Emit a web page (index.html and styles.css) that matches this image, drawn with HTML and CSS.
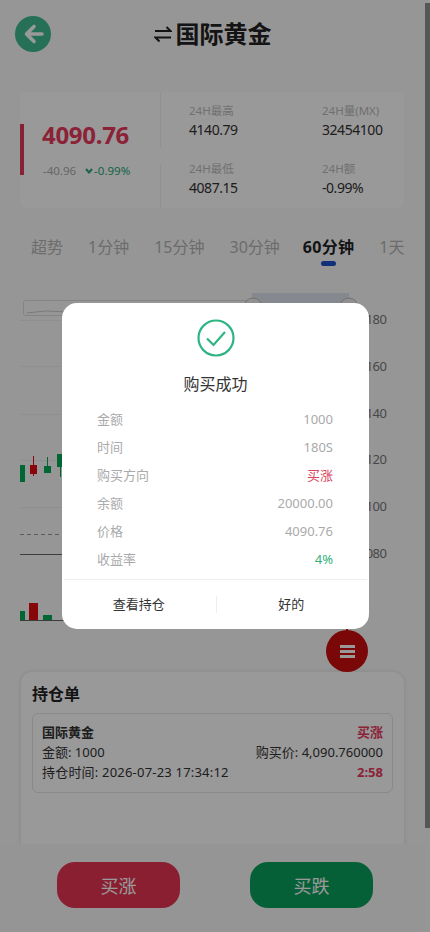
FILE: index.html
```html
<!DOCTYPE html>
<html lang="zh-CN">
<head>
<meta charset="utf-8">
<title>国际黄金</title>
<link rel="stylesheet" href="styles.css">
</head>
<body>
<div class="page">
  <header class="top">
    <button class="back" aria-label="返回">
      <svg viewBox="0 0 36 36" width="36" height="36"><circle cx="18" cy="18" r="18" class="back-bg"/><path d="M27 18H13M19 10.500L11.500 18L19 25.500" class="back-arrow"/></svg>
    </button>
    <div class="title">
      <svg viewBox="0 0 18 18" width="18" height="18"><path d="M1 6H16.500L12.500 2M17 12.500H1.500L5.500 16.500" class="swap"/></svg>
      <span>国际黄金</span>
    </div>
  </header>

  <section class="stats">
    <div class="stats-main">
      <div class="price">4090.76</div>
      <div class="change"><span>-40.96</span><span class="down"><svg viewBox="0 0 8 6" width="8" height="6"><path d="M1 1L4 4.500L7 1" class="chev"/></svg>-0.99%</span></div>
    </div>
    <div class="stats-grid">
      <div class="cell"><small>24H最高</small><b>4140.79</b></div>
      <div class="cell"><small>24H量(MX)</small><b>32454100</b></div>
      <div class="cell"><small>24H最低</small><b>4087.15</b></div>
      <div class="cell"><small>24H额</small><b>-0.99%</b></div>
    </div>
  </section>

  <nav class="tabs">
    <span>超势</span><span>1分钟</span><span>15分钟</span><span>30分钟</span><span class="active">60分钟</span><span>1天</span>
  </nav>

  <div class="chart">
    <svg viewBox="0 285 425 375" width="425" height="375">
      <rect x="23.500" y="300.500" width="240" height="15" rx="2" class="zoom-box"/>
      <path d="M27 313L45 311L70 312L120 308L260 309" class="zoom-line"/>
      <rect x="252" y="293" width="97" height="20" class="zoom-band"/>
      <circle cx="253" cy="307" r="9" class="zoom-handle"/>
      <circle cx="349" cy="307" r="9" class="zoom-handle"/>
      <path d="M20 320.500H365M20 366.500H365M20 414.500H365M20 460.500H365M20 507.500H365" class="grid"/>
      <path d="M20 534.500H365" class="dash"/>
      <path d="M20 554.500H365M20 620.500H365" class="axis"/>
      <g class="up">
        <rect x="20" y="465" width="5" height="17"/>
        <rect x="44" y="466" width="7" height="7"/>
        <path d="M47.500 457V466M60.500 454V477" class="wick-up"/>
        <rect x="57" y="454" width="8" height="13"/>
        <rect x="20" y="611" width="5" height="9"/>
        <rect x="43" y="615" width="9" height="5"/>
      </g>
      <g class="fall">
        <path d="M33.500 456V476" class="wick-fall"/>
        <rect x="30" y="465" width="7" height="9"/>
        <rect x="29" y="603" width="9" height="17"/>
      </g>
      <g class="ylabels">
        <text x="386.500" y="324">4180</text>
        <text x="386.500" y="371">4160</text>
        <text x="386.500" y="418">4140</text>
        <text x="386.500" y="464">4120</text>
        <text x="386.500" y="511">4100</text>
        <text x="386.500" y="558">4080</text>
      </g>
    </svg>
    <button class="fab" aria-label="菜单"><i></i><i></i><i></i></button>
  </div>

  <section class="holdings">
    <h2>持仓单</h2>
    <div class="order">
      <div class="order-row"><b>国际黄金</b><b class="red">买涨</b></div>
      <div class="order-row"><span>金额: 1000</span><span>购买价: 4,090.760000</span></div>
      <div class="order-row"><span class="stamp">持仓时间: 2026-07-23 17:34:12</span><b class="red">2:58</b></div>
    </div>
  </section>
</div>

<footer class="actions">
  <button class="trade rise">买涨</button>
  <button class="trade drop">买跌</button>
</footer>

<div class="scrollbar"><div class="thumb"></div></div>
<div class="mask"></div>

<div class="modal">
  <svg class="ok" viewBox="0 0 38 38" width="38" height="38"><circle cx="19" cy="19" r="17.500" class="ok-ring"/><path d="M10 19.500L16.500 26L28 13" class="ok-check"/></svg>
  <div class="modal-title">购买成功</div>
  <dl class="rows">
    <div><dt>金额</dt><dd>1000</dd></div>
    <div><dt>时间</dt><dd>180S</dd></div>
    <div><dt>购买方向</dt><dd class="pink">买涨</dd></div>
    <div><dt>余额</dt><dd>20000.00</dd></div>
    <div><dt>价格</dt><dd>4090.76</dd></div>
    <div><dt>收益率</dt><dd class="mint">4%</dd></div>
  </dl>
  <div class="modal-actions">
    <button>查看持仓</button>
    <button>好的</button>
  </div>
</div>
</body>
</html>
```
FILE: styles.css
```css
* { box-sizing: border-box; }
html, body { margin: 0; padding: 0; }
body {
  width: 430px;
  height: 932px;
  overflow: hidden;
  position: relative;
  background: #fbfbfb;
  font-family: "Noto Sans", "Noto Sans CJK SC", sans-serif;
  color: #222;
}
button { font: inherit; border: 0; background: none; padding: 0; color: inherit; }
.page { width: 425px; height: 932px; overflow: hidden; }

.top { height: 70px; display: flex; align-items: center; justify-content: center; position: relative; padding-bottom: 2px; }
.back { position: absolute; left: 15px; top: 16px; width: 36px; height: 36px; display: block; }
.back svg { display: block; }
.back-bg { fill: #40bb93; }
.back-arrow { fill: none; stroke: #fff; stroke-width: 3.600; stroke-linecap: round; stroke-linejoin: round; }
.title { display: flex; align-items: center; gap: 4px; font-size: 24px; line-height: 32px; font-weight: 700; color: #222; }
.title svg { display: block; }
.swap { fill: none; stroke: #222; stroke-width: 2; }

.stats { margin: 22px 21px 0 20px; height: 116px; background: #fff; border-radius: 8px; display: flex; }
.stats-main { width: 139px; flex: none; position: relative; padding: 28px 0 0 22px; }
.stats-main::before { content: ""; position: absolute; left: 0; top: 32px; width: 4px; height: 51px; background: #e03a56; }
.price { font-size: 24px; line-height: 30px; font-weight: 700; color: #e83a5c; letter-spacing: -.3px; }
.change { display: flex; gap: 9px; margin-top: 13px; padding-left: 1px; font-size: 11.500px; line-height: 16px; color: #aaa; white-space: nowrap; }
.down { color: #28a878; display: flex; align-items: center; gap: 0; }
.down svg { margin-right: 1px; }
.chev { fill: none; stroke: #28a878; stroke-width: 2; }
.stats-grid { flex: 1; display: grid; grid-template-columns: 133px 1fr; grid-template-rows: 72px 44px; padding-left: 29px; border-left: 1px solid transparent; position: relative;
  background: linear-gradient(#f1f1f1, #f1f1f1) 0 0 / 1px 56px no-repeat, linear-gradient(#f1f1f1, #f1f1f1) 0 72px / 1px 44px no-repeat; }
.cell { display: flex; flex-direction: column; padding-top: 10px; }
.cell:nth-child(n+3) { padding-top: 0; margin-top: -4px; }
.cell small { font-size: 11.500px; line-height: 18px; color: #bbb; }
.cell b { font-size: 14px; line-height: 19px; font-weight: 400; color: #333; letter-spacing: -.45px; }

.tabs { display: flex; gap: 25px; margin-top: 20px; padding-left: 31px; font-size: 16px; line-height: 38px; height: 40px; color: #b4b4b4; white-space: nowrap; }
.tabs .active { position: relative; font-weight: 700; color: #222; margin-left: -2px; letter-spacing: .3px; }
.tabs .active::after { content: ""; position: absolute; left: 18px; top: 33px; width: 15px; height: 5px; border-radius: 3px; background: #1c50cc; }

.chart { height: 386px; margin-top: 17px; position: relative; }
.chart svg { display: block; }
.zoom-box { fill: none; stroke: #ddd; }
.zoom-line { fill: none; stroke: #ccc; }
.zoom-band { fill: #dfe3ee; }
.zoom-handle { fill: #f0f0f0; stroke: #bbb; }
.grid { fill: none; stroke: #eee; }
.dash { fill: none; stroke: #999; stroke-dasharray: 4 3; }
.axis { fill: none; stroke: #666; }
.up rect { fill: #00ab55; }
.wick-up { fill: none; stroke: #00ab55; }
.fall rect { fill: #e00a12; }
.wick-fall { fill: none; stroke: #e00a12; }
.ylabels text { font-size: 13px; letter-spacing: -.5px; fill: #777; text-anchor: end; font-family: "Noto Sans", sans-serif; }
.fab { position: absolute; left: 326px; top: 345px; width: 42px; height: 42px; border-radius: 50%; background: #cc0e0e; display: flex; flex-direction: column; justify-content: center; align-items: center; gap: 2px; }
.fab::before { content: ""; position: absolute; left: 20px; top: -2px; width: 2px; height: 3px; background: #cc0e0e; }
.fab i { display: block; width: 15px; height: 3px; background: #fff; }

.holdings { margin: 0 20px 0 20px; height: 200px; background: #fff; border-radius: 12px; border: 1px solid #eee; box-shadow: 0 0 4px rgba(0,0,0,.08); padding: 10px 11px; }
.holdings h2 { margin: 0; font-size: 16px; line-height: 24px; font-weight: 700; color: #222; }
.order { margin-top: 7px; height: 80px; border: 1px solid #e4e4e4; border-radius: 6px; padding: 8px 9px 0; font-size: 13px; line-height: 20px; color: #333; }
.order-row { display: flex; justify-content: space-between; white-space: nowrap; }
.order-row b { font-weight: 700; }
.stamp { letter-spacing: .2px; }
.red { color: #e83a5c; }

.actions { position: absolute; left: 0; bottom: 0; width: 425px; height: 88px; background: #f9f9fb; display: flex; justify-content: space-between; padding: 18px 52px 0 57px; }
.trade { width: 123px; height: 46px; border-radius: 18px; font-size: 18px; color: #fff; }
.rise { background: #e53452; }
.drop { background: #0aa05c; }

.scrollbar { position: absolute; right: 0; top: 0; width: 5px; height: 932px; background: #fbfbfb; }
.thumb { height: 825px; margin-top: 3px; background: #8f8f8f; }

.mask { position: absolute; inset: 0; background: rgba(0,0,0,.4); }

.modal { position: absolute; left: 62px; top: 303px; width: 307px; height: 326px; background: #fff; border-radius: 15px; display: flex; flex-direction: column; align-items: center; padding-top: 16px; }
.ok { display: block; margin-left: 0; }
.ok-ring { fill: none; stroke: #2fb584; stroke-width: 2.200; }
.ok-check { fill: none; stroke: #2fb584; stroke-width: 2.200; }
.modal-title { margin-top: 16px; font-size: 16px; line-height: 22px; color: #333; }
.rows { margin: 10px 0 0; width: 100%; padding: 0 36px 0 35px; font-size: 13px; }
.rows div { display: flex; justify-content: space-between; height: 28px; line-height: 28px; color: #aaa; }
.rows dt, .rows dd { margin: 0; }
.pink { color: #d94560; }
.mint { color: #30b07c; }
.modal-actions { width: 303px; margin-top: 6px; border-top: 1px solid #eee; flex: 1; display: flex; align-items: center; font-size: 13px; color: #333; padding-bottom: 1px; }
.modal-actions button { flex: 1; height: 17px; line-height: 17px; padding-right: 1px; }
.modal-actions button:first-child { border-right: 1px solid #eee; padding-right: 2px; }
```
